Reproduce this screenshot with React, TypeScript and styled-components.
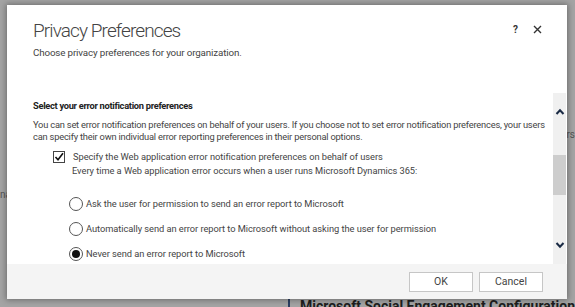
import { FunctionComponent, useState } from "react";
import styled, { createGlobalStyle } from "styled-components";

const GlobalStyle = createGlobalStyle`
  html, body {
    margin: 0;
    padding: 0;
    width: 575px;
    height: 307px;
    overflow: hidden;
    font-family: Roboto, "Open Sans", sans-serif;
  }
`;

const Page = styled.div`
  position: relative;
  width: 575px;
  height: 307px;
  background: #a4a4a4;
  overflow: hidden;
`;

const Backdrop = styled.div`
  display: flex;
  flex-direction: column;
  height: 100%;
`;

const BackdropSides = styled.div`
  display: flex;
  justify-content: space-between;
  font-size: 10px;
  color: #555;
`;

const BackdropSide = styled.span<{ $top: number }>`
  padding-top: ${(p) => p.$top}px;
`;

const BackdropFooter = styled.div`
  display: flex;
  align-items: flex-start;
  gap: 10px;
  margin-top: auto;
  height: 8px;
  padding-left: 288px;
  font-size: 14px;
  font-weight: 700;
  line-height: 14px;
  color: #1e1e1e;
  white-space: nowrap;
  overflow: hidden;
`;

const BackdropIcon = styled.div`
  width: 40px;
  height: 14px;
  background: #2c3f63;
`;

const Overlay = styled.div`
  position: absolute;
  inset: 0;
  padding: 5px 0 0 7px;
`;

const Dialog = styled.div`
  display: flex;
  flex-direction: column;
  width: 560px;
  height: 294px;
  background: #fff;
  box-shadow: 0 0 6px 1px rgba(0, 0, 0, 0.35);
`;

const Header = styled.div`
  display: flex;
  justify-content: space-between;
  align-items: flex-start;
  padding: 12px 25px 0 26px;
  height: 77px;
  box-sizing: border-box;
`;

const Titles = styled.div`
  display: flex;
  flex-direction: column;
`;

const Title = styled.h1`
  margin: 0;
  font-size: 19px;
  font-weight: 300;
  line-height: 28px;
  letter-spacing: -0.9px;
  color: #444;
`;

const Subtitle = styled.div`
  font-size: 9.8px;
  line-height: 14px;
  letter-spacing: -0.15px;
  color: #444;
  margin-top: 1px;
`;

const HeaderTools = styled.div`
  display: flex;
  align-items: center;
  gap: 13px;
  padding-top: 7px;
`;

const ToolButton = styled.button`
  display: flex;
  align-items: center;
  justify-content: center;
  padding: 0;
  border: none;
  background: none;
  color: #333;
  font: 700 10px Roboto, sans-serif;
  width: 9px;
  height: 10px;
`;

const Body = styled.div`
  display: flex;
  flex: 1;
  min-height: 0;
  margin-top: 11px;
`;

const Content = styled.div`
  flex: 1;
  overflow: hidden;
  padding: 6px 12px 0 26px;
  color: #444;
  font-size: 9.3px;
  letter-spacing: -0.05px;
`;

const SectionTitle = styled.div`
  font-weight: 700;
  font-size: 9.3px;
  letter-spacing: -0.3px;
  color: #222;
  line-height: 14px;
`;

const Paragraph = styled.p`
  margin: 6px 0 0;
  line-height: 12px;
  letter-spacing: -0.2px;
  white-space: nowrap;
`;

const OptionRow = styled.label<{ $indent: number; $gap: number }>`
  display: flex;
  align-items: center;
  gap: ${(p) => p.$gap}px;
  padding-left: ${(p) => p.$indent}px;
  line-height: 14px;
  white-space: nowrap;
`;

const CheckRow = styled(OptionRow)`
  margin-top: 7px;
`;

const Note = styled.div`
  margin: 0 0 0 39px;
  line-height: 14px;
`;

const RadioList = styled.div`
  display: flex;
  flex-direction: column;
  gap: 11px;
  margin-top: 19px;
`;

const Box = styled.span`
  display: flex;
  align-items: center;
  justify-content: center;
  width: 10px;
  height: 10px;
  border: 1px solid #444;
  background: #fff;
`;

const Radio = styled.span<{ $on: boolean }>`
  display: flex;
  align-items: center;
  justify-content: center;
  width: 12px;
  height: 12px;
  border-radius: 50%;
  border: 1px solid #555;
  background: #fff;
  &::after {
    content: "";
    width: 8px;
    height: 8px;
    border-radius: 50%;
    background: ${(p) => (p.$on ? "#111" : "transparent")};
  }
`;

const Scrollbar = styled.div`
  display: flex;
  flex-direction: column;
  align-items: center;
  width: 13px;
  margin-right: 1px;
  background: #f0f0f0;
  color: #1b2b45;
`;

const Arrow = styled.div`
  height: 37px;
  display: flex;
  align-items: center;
  justify-content: center;
`;

const Track = styled.div`
  flex: 1;
  width: 100%;
  display: flex;
  flex-direction: column;
`;

const Thumb = styled.div`
  margin-top: 25px;
  height: 40px;
  background: #cdcdcd;
`;

const Footer = styled.div`
  display: flex;
  justify-content: flex-end;
  align-items: center;
  gap: 6px;
  height: 35px;
  padding-right: 24px;
  background: #f4f4f4;
`;

const Button = styled.button`
  width: 64px;
  height: 20px;
  padding: 0;
  border: 1px solid #c6c6c6;
  background: #fff;
  color: #444;
  font: 400 10.5px Roboto, sans-serif;
`;

const radioOptions = [
  "Ask the user for permission to send an error report to Microsoft",
  "Automatically send an error report to Microsoft without asking the user for permission",
  "Never send an error report to Microsoft",
];

const Chevron: FunctionComponent<{ up?: boolean }> = ({ up }) => (
  <svg width="10" height="7" viewBox="0 0 10 7">
    <path
      d={up ? "M1.5 6 L5 2.2 L8.5 6" : "M1.5 1 L5 4.8 L8.5 1"}
      fill="none"
      stroke="currentColor"
      strokeWidth="2"
    />
  </svg>
);

export default function App() {
  const [choice, setChoice] = useState(2);
  const [onBehalf, setOnBehalf] = useState(true);

  return (
    <Page>
      <GlobalStyle />
      <Backdrop>
        <BackdropSides>
          <BackdropSide $top={189}>na</BackdropSide>
          <BackdropSide $top={129}>ers</BackdropSide>
        </BackdropSides>
        <BackdropFooter>
          <BackdropIcon />
          <span>Microsoft Social Engagement Configuration</span>
        </BackdropFooter>
      </Backdrop>
      <Overlay>
        <Dialog>
          <Header>
            <Titles>
              <Title>Privacy Preferences</Title>
              <Subtitle>Choose privacy preferences for your organization.</Subtitle>
            </Titles>
            <HeaderTools>
              <ToolButton>?</ToolButton>
              <ToolButton>
                <svg width="9" height="9" viewBox="0 0 9 9">
                  <path d="M1 1 L8 8 M8 1 L1 8" stroke="#333" strokeWidth="1.4" />
                </svg>
              </ToolButton>
            </HeaderTools>
          </Header>
          <Body>
            <Content>
              <SectionTitle>Select your error notification preferences</SectionTitle>
              <Paragraph>
                You can set error notification preferences on behalf of your users. If you choose not to set error
                notification preferences, your users
                <br />
                can specify their own individual error reporting preferences in their personal options.
              </Paragraph>
              <CheckRow $indent={20} $gap={8} onClick={() => setOnBehalf(!onBehalf)}>
                <Box>
                  {onBehalf && (
                    <svg width="10" height="10" viewBox="0 0 10 10">
                      <path d="M1.5 5 L4 7.8 L9 1.2" fill="none" stroke="#111" strokeWidth="1.6" />
                    </svg>
                  )}
                </Box>
                Specify the Web application error notification preferences on behalf of users
              </CheckRow>
              <Note>Every time a Web application error occurs when a user runs Microsoft Dynamics 365:</Note>
              <RadioList>
                {radioOptions.map((text, i) => (
                  <OptionRow key={text} $indent={36} $gap={3} onClick={() => setChoice(i)}>
                    <Radio $on={choice === i} />
                    {text}
                  </OptionRow>
                ))}
              </RadioList>
            </Content>
            <Scrollbar>
              <Arrow>
                <Chevron up />
              </Arrow>
              <Track>
                <Thumb />
              </Track>
              <Arrow>
                <Chevron />
              </Arrow>
            </Scrollbar>
          </Body>
          <Footer>
            <Button>OK</Button>
            <Button>Cancel</Button>
          </Footer>
        </Dialog>
      </Overlay>
    </Page>
  );
}
